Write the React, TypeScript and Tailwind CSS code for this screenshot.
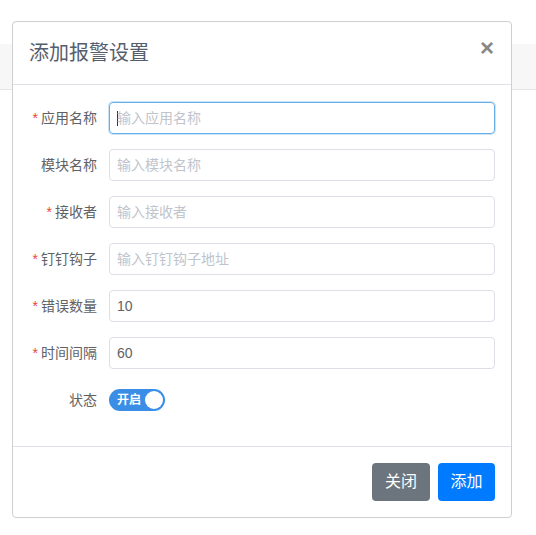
import React from "react";

const font = { fontFamily: '"Liberation Sans", "Noto Sans CJK SC", sans-serif' };

type Field = { label: string; required: boolean; placeholder: string; value?: string; focused?: boolean };

const fields: Field[] = [
  { label: "应用名称", required: true, placeholder: "输入应用名称", focused: true },
  { label: "模块名称", required: false, placeholder: "输入模块名称" },
  { label: "接收者", required: true, placeholder: "输入接收者" },
  { label: "钉钉钩子", required: true, placeholder: "输入钉钉钩子地址" },
  { label: "错误数量", required: true, placeholder: "", value: "10" },
  { label: "时间间隔", required: true, placeholder: "", value: "60" },
];

function Label({ text, required }: { text: string; required: boolean }) {
  return (
    <div className="w-[80px] shrink-0 pr-[12px] text-right text-[14px] text-[#606266]">
      {required && <span className="mr-[3px] text-[#e8473a]">*</span>}
      {text}
    </div>
  );
}

export default function App() {
  return (
    <div className="relative h-[535px] w-[536px] overflow-hidden bg-white" style={font}>
      {/* page band behind the dialog */}
      <div className="mt-[44px] h-[46px] border-b border-[#e6e6e6] bg-[#f7f7f7]" />

      {/* dialog */}
      <div className="absolute left-[12px] top-[21px] w-[500px] rounded-[4px] border border-[#cfcfcf] bg-white">
        <div className="flex h-[63px] items-center justify-between border-b border-[#dee2e6] px-[16px]">
          <h5 className="text-[20px] leading-[30px] text-[#555e6e]">添加报警设置</h5>
          <button className="-mt-[10px] mr-[1px] text-[24px] font-bold leading-none text-[#888]">×</button>
        </div>

        <div className="px-[16px] pb-[15px] pt-[17px]">
          {fields.map((f) => (
            <div key={f.label} className="mb-[15px] flex h-[32px] items-center">
              <Label text={f.label} required={f.required} />
              <div
                className={
                  f.focused
                    ? "flex h-[32px] flex-1 items-center rounded-[4px] border border-[#66afe9] px-[7px] shadow-[0_0_0_1px_rgba(102,175,233,0.35)]"
                    : "flex h-[32px] flex-1 items-center rounded-[4px] border border-[#dcdfe6] px-[7px]"
                }
              >
                {f.focused && <span className="mr-[-1px] h-[15px] w-[1px] bg-[#333]" />}
                {f.value ? (
                  <span className="text-[14px] text-[#606266]">{f.value}</span>
                ) : (
                  <span className="text-[14px] text-[#c0c4cc]">{f.placeholder}</span>
                )}
              </div>
            </div>
          ))}
          <div className="mb-[15px] flex h-[32px] items-center">
            <Label text="状态" required={false} />
            <div className="flex h-[22px] w-[56px] items-center justify-between rounded-full bg-[#3a8ee6] pl-[8px] pr-[2px]">
              <span className="text-[12px] font-bold text-white">开启</span>
              <span className="h-[18px] w-[18px] rounded-full bg-white" />
            </div>
          </div>
        </div>

        <div className="flex justify-end gap-[8px] border-t border-[#dee2e6] p-[16px]">
          <button className="h-[38px] w-[58px] rounded-[4px] bg-[#6c757d] text-[16px] text-white">关闭</button>
          <button className="h-[38px] w-[57px] rounded-[4px] bg-[#007bff] text-[16px] text-white">添加</button>
        </div>
      </div>
    </div>
  );
}
